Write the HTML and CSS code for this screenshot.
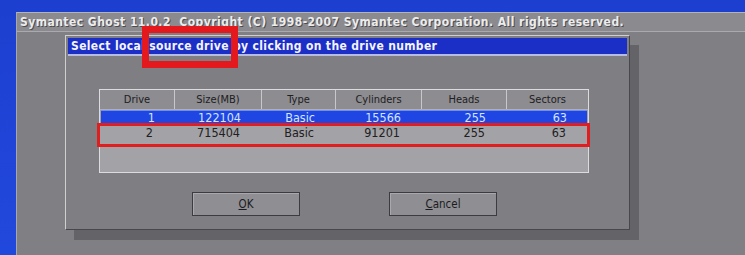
FILE: index.html
```html
<!DOCTYPE html>
<html lang="en">
<head>
    <meta charset="UTF-8">
    <title>Symantec Ghost</title>
    <link rel="stylesheet" href="styles.css">
</head>
<body>
    <div class="window">
        <div class="window-title">Symantec Ghost 11.0.2&nbsp; Copyright (C) 1998-2007 Symantec Corporation. All rights reserved.</div>
        <div class="desk">
            <div class="dialog">
                <div class="dialog-title">Select local source drive by clicking on the drive number</div>
                <div class="table-wrap">
                    <div class="table">
                        <div class="row head">
                            <div class="cell">Drive</div>
                            <div class="cell">Size(MB)</div>
                            <div class="cell">Type</div>
                            <div class="cell">Cylinders</div>
                            <div class="cell">Heads</div>
                            <div class="cell">Sectors</div>
                        </div>
                        <div class="row data selected">
                            <div class="cell">1</div>
                            <div class="cell">122104</div>
                            <div class="cell">Basic</div>
                            <div class="cell">15566</div>
                            <div class="cell">255</div>
                            <div class="cell">63</div>
                        </div>
                        <div class="row data">
                            <div class="cell">2</div>
                            <div class="cell">715404</div>
                            <div class="cell">Basic</div>
                            <div class="cell">91201</div>
                            <div class="cell">255</div>
                            <div class="cell">63</div>
                        </div>
                    </div>
                    <div class="mark-row"></div>
                </div>
                <div class="buttons">
                    <button class="btn"><u>O</u>K</button>
                    <button class="btn"><u>C</u>ancel</button>
                </div>
            </div>
        </div>
    </div>
    <div class="mark-title"></div>
</body>
</html>
```

FILE: styles.css
```css
body {
    margin: 0;
    width: 745px;
    height: 255px;
    overflow: hidden;
    box-sizing: border-box;
    padding: 12px 0 0 16px;
    background: linear-gradient(to bottom, #1d3fd0, #2148dc);
    font-family: "DejaVu Sans Condensed", "DejaVu Sans", sans-serif;
    position: relative;
}
.window {
    height: 243px;
    background: #807f83;
    border-top: 1px solid #b4b4b8;
    border-left: 1px solid #a8a8ac;
}
.window-title {
    height: 18px;
    line-height: 18px;
    padding-left: 3px;
    background: #8b8a8e;
    border-bottom: 1px solid #aaa9ad;
    color: #ececec;
    font-weight: bold;
    font-size: 12px;
    letter-spacing: 0.46px;
    text-shadow: 1px 1px 0 #4c4c50;
    white-space: nowrap;
}
.desk {
    padding: 3px 0 0 48px;
}
.dialog {
    width: 565px;
    height: 195px;
    box-sizing: border-box;
    padding: 2px;
    background: #7f7e82;
    border: 1px solid;
    border-color: #cfcfd2 #48484c #48484c #cfcfd2;
    box-shadow: 9px 10px 0 #646367;
}
.dialog-title {
    height: 16px;
    line-height: 16px;
    padding-left: 3px;
    background: #1b2ec6;
    border-bottom: 2px solid #b6bde0;
    color: #f4f4ff;
    font-weight: bold;
    font-size: 12px;
    letter-spacing: 0.35px;
    white-space: nowrap;
}
.table-wrap {
    position: relative;
    margin: 33px 0 0 31px;
    width: 490px;
}
.table {
    height: 84px;
    box-sizing: border-box;
    border: 1px solid #dcdcde;
    background: #a3a2a6;
}
.row {
    display: grid;
    grid-template-columns: 75px 87px 74px 86px 85px 81px;
}
.head {
    height: 19px;
    background: #8d8c90;
    border-bottom: 1px solid #b0afb3;
    color: #202022;
    font-size: 11px;
}
.head .cell {
    line-height: 19px;
    text-align: center;
    border-right: 1px solid #c8c8cb;
}
.head .cell:last-child {
    border-right: none;
}
.data {
    height: 15px;
    line-height: 15px;
    font-size: 12.5px;
    color: #202022;
}
.data .cell {
    text-align: right;
    padding-right: 22px;
}
.selected {
    height: 14px;
    line-height: 14px;
    margin: 0 1px;
    background: #1f46e2;
    border-top: 1px solid #6f8ff0;
    color: #d4e4ff;
}
.selected .cell:first-child {
    padding-right: 21px;
}
.mark-row {
    position: absolute;
    left: -2px;
    top: 34px;
    width: 493px;
    height: 24px;
    box-sizing: border-box;
    border: 3px solid #e01d1f;
}
.buttons {
    display: flex;
    gap: 89px;
    margin-top: 19px;
    padding-left: 124px;
}
.btn {
    width: 108px;
    height: 24px;
    padding: 0;
    background: #8f8e92;
    border: 1px solid #3c3c40;
    box-shadow: inset 1px 1px 0 #a9a8ac;
    color: #1c1c1e;
    font-family: "DejaVu Sans Condensed", "DejaVu Sans", sans-serif;
    font-size: 11.5px;
}
.mark-title {
    position: absolute;
    left: 142px;
    top: 26px;
    width: 96px;
    height: 42px;
    box-sizing: border-box;
    border: 7px solid #e3191d;
}
```
